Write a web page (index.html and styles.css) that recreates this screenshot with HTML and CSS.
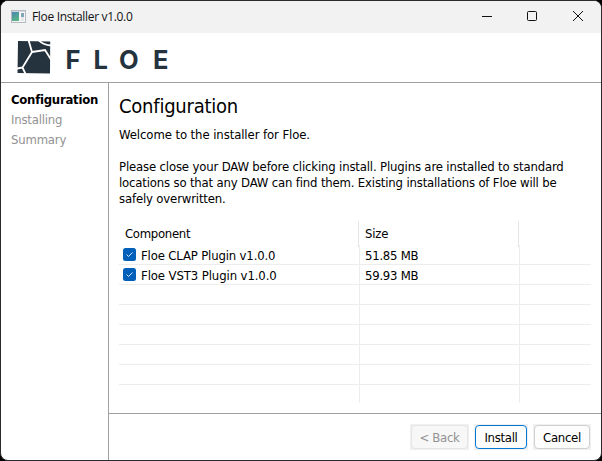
FILE: index.html
```html
<!DOCTYPE html>
<html lang="en">
<head>
<meta charset="utf-8">
<title>Floe Installer v1.0.0</title>
<link rel="stylesheet" href="styles.css">
</head>
<body>
<div class="window">
  <header class="titlebar">
    <svg class="app-icon" width="15" height="13" viewBox="0 0 15 13">
      <defs><linearGradient id="pane" x2="0.4" y2="1"><stop offset="0" stop-color="#4c86b4"/><stop offset="1" stop-color="#56b486"/></linearGradient></defs>
      <rect x=".5" y=".5" width="14" height="12" fill="#f6f6f6" stroke="#b5bac1"/>
      <rect x="1" y="1" width="13" height="1" fill="#d3d8df"/>
      <rect x="1" y="2" width="7" height="9" fill="url(#pane)"/>
      <rect x="10" y="3" width="3" height="4" fill="#83a5b5"/>
      <rect x="10" y="7" width="3" height="4" fill="#e4e6e8"/>
    </svg>
    <span class="caption">Floe Installer v1.0.0</span>
    <svg class="controls" width="102" height="12" viewBox="0 0 102 12" fill="none" stroke="#111">
      <path d="M0 6.500H10"/>
      <rect x="45.500" y="1.500" width="9" height="9" rx="1"/>
      <path d="M91 1L101 11M101 1L91 11"/>
    </svg>
  </header>
  <div class="banner">
    <svg class="mark" width="34" height="33" viewBox="0 0 34 33">
      <path d="M1 0L33.200 .6L33 32.500L.5 32Z" fill="#24333d"/>
      <path d="M11.500 -1L15 11L5.500 26.500L8.500 33M5.500 26.500L0 27.500M15 11L28 9L34 18.500M21.500 -1Q26 4 34 4.500" fill="none" stroke="#fff" stroke-width="1.800"/>
    </svg>
    <div class="wordmark"><span>F</span><span>L</span><span>O</span><span>E</span></div>
  </div>
  <div class="body">
    <nav class="steps">
      <div class="step current">Configuration</div>
      <div class="step">Installing</div>
      <div class="step">Summary</div>
    </nav>
    <div class="main">
      <section class="page">
        <h1>Configuration</h1>
        <p class="welcome">Welcome to the installer for Floe.</p>
        <p class="info"><span class="l1">Please close your DAW before clicking install. Plugins are installed to standard</span><br><span class="l2">locations so that any DAW can find them. Existing installations of Floe will be</span><br><span class="l3">safely overwritten.</span></p>
        <div class="list">
          <div class="head"><div class="component">Component</div><div>Size</div><div></div></div>
          <div class="row"><div><svg class="check" width="13" height="13" viewBox="0 0 13 13"><rect width="13" height="13" rx="2.500" fill="#005fb8"/><path d="M3.500 6.500L5.500 8.500L9.500 4.500" fill="none" stroke="#d5e7f7"/></svg><span>Floe CLAP Plugin v1.0.0</span></div><div>51.85 MB</div><div></div></div>
          <div class="row"><div><svg class="check" width="13" height="13" viewBox="0 0 13 13"><rect width="13" height="13" rx="2.500" fill="#005fb8"/><path d="M3.500 6.500L5.500 8.500L9.500 4.500" fill="none" stroke="#d5e7f7"/></svg><span class="vst">Floe VST3 Plugin v1.0.0</span></div><div>59.93 MB</div><div></div></div>
          <div class="row"><div></div><div></div><div></div></div>
          <div class="row"><div></div><div></div><div></div></div>
          <div class="row"><div></div><div></div><div></div></div>
          <div class="row"><div></div><div></div><div></div></div>
          <div class="row"><div></div><div></div><div></div></div>
          <div class="row last"><div></div><div></div><div></div></div>
        </div>
      </section>
      <footer class="actions">
        <div class="slot"><button class="back" disabled>&lt; Back</button></div>
        <div class="slot"><button class="install">Install</button></div>
        <div class="slot"><button class="cancel">Cancel</button></div>
      </footer>
    </div>
  </div>
</div>
</body>
</html>
```
FILE: styles.css
```css
* { box-sizing: border-box; }
body { margin: 0; background: #000; font: 13px/16px "DejaVu Sans Condensed", "DejaVu Sans", sans-serif; font-stretch: condensed; letter-spacing: -0.16px; color: #000; white-space: nowrap; overflow: hidden; }
.window { width: 602px; height: 461px; border: 1px solid #2b2b2f; border-radius: 8px; background: #fff; overflow: hidden; display: flex; flex-direction: column; }
.titlebar { height: 32px; background: #f2f2f2; display: flex; align-items: center; padding: 0 17px 2px 10px; }
.app-icon { flex: none; }
.caption { font: 12px/16px "Open Sans", sans-serif; letter-spacing: -0.33px; margin: 2px 0 0 6px; color: #111; flex: 1; }
.controls { flex: none; }
.banner { height: 50px; border-bottom: 1px solid #a0a0a0; display: flex; padding: 8px 0 0 16px; }
.wordmark { display: flex; margin-left: 14.500px; font: 700 25.500px/38px Inter, sans-serif; color: #24333d; letter-spacing: 0; }
.wordmark span { width: 28px; }
.wordmark span:nth-child(2) { width: 25.500px; }
.wordmark span:nth-child(3) { width: 34px; }
.body { flex: 1; display: flex; }
.steps { width: 108px; border-right: 1px solid #a0a0a0; padding: 7px 0 0 10px; line-height: 20px; letter-spacing: -0.2px; }
.step { color: #929292; }
.current { color: #000; font-weight: 700; letter-spacing: -0.26px; }
.main { flex: 1; display: flex; flex-direction: column; }
.page { height: 330px; padding: 11px 10px 0; }
h1 { font-size: 20px; line-height: 24px; font-weight: 400; letter-spacing: -0.23px; margin: 0; }
p { margin: 0; }
.welcome { margin-top: 9px; letter-spacing: -0.09px; }
.info { margin-top: 16px; }
.l1 { letter-spacing: -0.16px; }
.l2 { letter-spacing: -0.17px; }
.list { margin-top: 14px; width: 472px; }
.head, .row { display: grid; grid-template-columns: 241px 160px 71px; }
.head { grid-template-columns: 240px 160px 72px; height: 24px; line-height: 26px; }
.component { letter-spacing: -0.3px; }
.head div { border-right: 1px solid #e5e5e5; padding-left: 6px; }
.row { height: 20px; border-bottom: 1px solid #ededed; line-height: 21px; }
.row div { border-right: 1px solid #ededed; padding-left: 5px; display: flex; }
.row div:first-child { padding-left: 4px; }
.row div:nth-child(2) { letter-spacing: -0.25px; }
.head div:last-child, .row div:last-child { border-right: 0; }
.vst { letter-spacing: -0.1px; }
.last { height: 18px; border-bottom: 0; }
.check { margin: 3px 5px 0 0; flex: none; }
.actions { height: 47px; border-top: 1px solid #a0a0a0; display: flex; justify-content: flex-end; gap: 5px; padding: 10px 10px 0 0; }
.slot { background: #f0f0f0; padding: 1px; height: 26px; }
button { display: block; height: 24px; border: 1px solid #d0d0d0; border-radius: 4px; background: #fdfdfd; color: #000; font: inherit; letter-spacing: -0.3px; padding: 1px 0 0; }
.back { width: 57px; color: #929292; background: #f7f7f7; border-color: #e5e5e5; }
.install { width: 52px; border-color: #0078d4; }
.cancel { width: 56px; }
```
